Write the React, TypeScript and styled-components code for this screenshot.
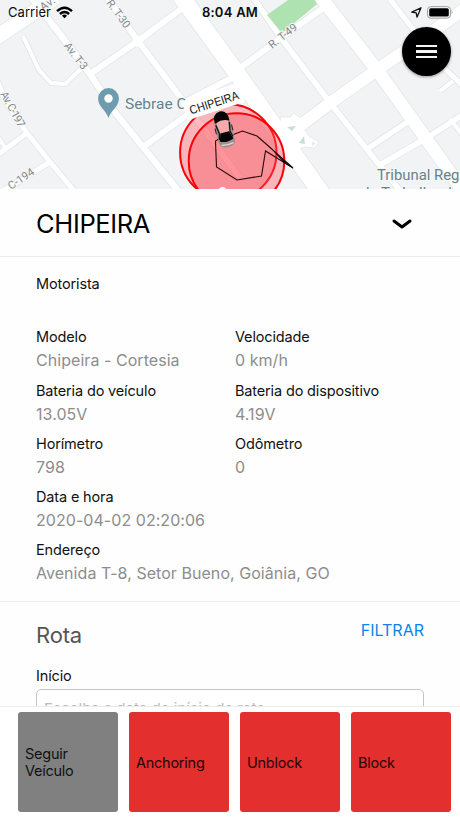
import React from 'react';
import styled, {createGlobalStyle} from "styled-components";

const GlobalStyle = createGlobalStyle`
    * {
        box-sizing: border-box;
    }
    body {
        margin: 0;
        background: #fff;
        font-family: Inter, "Liberation Sans", sans-serif;
        -webkit-font-smoothing: antialiased;
    }
`
const Screen = styled.main`
    width: 460px;
    height: 818px;
    display: flex;
    flex-direction: column;
    overflow: hidden;
    background: #fefefe;
`
const MapArea = styled.section`
    position: relative;
    flex: none;
    height: 189px;
    overflow: hidden;
    background: #f1f3f4;
`
const MapDrawing = styled.svg`
    position: absolute;
    inset: 0;
    font-family: Roboto, Inter, sans-serif;
`
const StatusBar = styled.header`
    position: relative;
    display: grid;
    grid-template-columns: 1fr auto 1fr;
    align-items: center;
    height: 24px;
    padding: 0 6px 0 8px;
    color: #0c0c0c;
`
const StatusGroup = styled.div<{ $end?: boolean }>`
    display: flex;
    align-items: center;
    justify-content: ${props => props.$end ? 'flex-end' : 'flex-start'};
    gap: 5px;
    font-size: 13px;
    letter-spacing: 0.05px;
`
const Clock = styled.time`
    margin-right: 2px;
    font-size: 13px;
    font-weight: 600;
    letter-spacing: 0.25px;
`
const MenuButton = styled.button`
    position: absolute;
    top: 27px;
    right: 9px;
    width: 49px;
    height: 49px;
    display: flex;
    flex-direction: column;
    align-items: center;
    justify-content: center;
    gap: 3px;
    padding: 0;
    border: 0;
    border-radius: 50%;
    background: #000;
    box-shadow: 0 1px 3px rgba(0, 0, 0, 0.4);
`
const MenuLine = styled.span`
    width: 21px;
    height: 2.5px;
    background: #f4f4f4;
`
const TitleBar = styled.div`
    flex: none;
    display: flex;
    align-items: center;
    justify-content: space-between;
    height: 68px;
    padding: 2px 47px 0 36px;
    border-bottom: 1px solid #ededed;
`
const Title = styled.h1`
    margin: 0;
    font-size: 25.5px;
    font-weight: 400;
    letter-spacing: -0.35px;
    color: #000;
`
const Content = styled.section`
    flex: 1;
    min-height: 0;
    overflow: hidden;
`
const Details = styled.dl`
    display: grid;
    grid-template-columns: 199px 1fr;
    grid-auto-rows: 53.3px;
    height: 345px;
    margin: 0;
    padding: 17px 36px 0;
    border-bottom: 1px solid #ededed;
`
const Field = styled.div<{ $wide?: boolean }>`
    grid-column: ${props => props.$wide ? '1 / -1' : 'auto'};
    white-space: nowrap;
`
const Label = styled.dt`
    font-size: 14.5px;
    line-height: 20px;
    letter-spacing: -0.15px;
    color: #111;
`
const Value = styled.dd`
    margin: 1px 0 0;
    font-size: 16px;
    line-height: 24px;
    letter-spacing: 0.05px;
    color: #8d8d8d;
`
const RouteHeader = styled.div`
    display: flex;
    justify-content: space-between;
    padding: 17px 36px 0;
`
const RouteTitle = styled.h2`
    margin: 0;
    font-size: 22px;
    line-height: 32px;
    font-weight: 400;
    letter-spacing: -0.2px;
    color: #555;
`
const FilterButton = styled.button`
    height: 22px;
    padding: 0;
    border: 0;
    background: none;
    font: 400 16px/22px Inter, sans-serif;
    color: #0a84e8;
`
const RouteForm = styled.form`
    padding: 15px 36px 0;
`
const InputLabel = styled.label`
    display: block;
    font-size: 14.5px;
    line-height: 20px;
    letter-spacing: -0.15px;
    color: #111;
`
const DateInput = styled.input`
    display: block;
    width: 100%;
    height: 38px;
    margin-top: 3px;
    padding: 0 7px;
    border: 1px solid #c4c4c4;
    border-radius: 5px;
    background: #fff;
    font: 400 15px Inter, sans-serif;

    &::placeholder {
        color: #bbb;
    }
`
const Actions = styled.footer`
    flex: none;
    display: flex;
    gap: 11px;
    height: 112px;
    padding: 5px 9px 0 18px;
    border-top: 1px solid #ededed;
    background: #fff;
`
const ActionButton = styled.button<{ $muted?: boolean }>`
    flex: none;
    width: 100px;
    height: 100px;
    padding: 0 7px;
    border: 0;
    border-radius: 3px;
    background: ${props => props.$muted ? '#808080' : '#e42f2f'};
    font: 400 14.5px/17px Inter, sans-serif;
    letter-spacing: -0.25px;
    text-align: left;
    color: ${props => props.$muted ? '#111' : '#240505'};
`

interface IField {
    label: string
    value?: string
    wide?: boolean
}

interface IRoad {
    d: string
    w: number
}

const fields: IField[] = [
    {label: 'Motorista', wide: true},
    {label: 'Modelo', value: 'Chipeira - Cortesia'},
    {label: 'Velocidade', value: '0 km/h'},
    {label: 'Bateria do veículo', value: '13.05V'},
    {label: 'Bateria do dispositivo', value: '4.19V'},
    {label: 'Horímetro', value: '798'},
    {label: 'Odômetro', value: '0'},
    {label: 'Data e hora', value: '2020-04-02 02:20:06', wide: true},
    {label: 'Endereço', value: 'Avenida T-8, Setor Bueno, Goiânia, GO', wide: true},
]

const roads: IRoad[] = [
    {d: 'M-6 39L56-3', w: 15},
    {d: 'M27-8L60 34L90 74L117 115L143 147L180 193', w: 6.5},
    {d: 'M106-4L138 41L181 98L240 178', w: 6},
    {d: 'M90 74L138 41L188 4', w: 6},
    {d: 'M143 147L187 115L210 98', w: 6},
    {d: 'M181 104L236 76', w: 6},
    {d: 'M23 36L39 70L51 83L65 84L82 68', w: 4},
    {d: 'M180-5L236 72L290 149L322 194', w: 17},
    {d: 'M319-5L377 70L417 126L464 192', w: 13},
    {d: 'M466 8L377 70L333 101L286 136', w: 12},
    {d: 'M240 68L281 38L326 6', w: 6},
    {d: 'M248-10L281 38L331 104L377 162L402 193', w: 5.5},
    {d: 'M386-6L413 29L443 67L463 86', w: 5},
    {d: 'M440 91L453 81', w: 4},
    {d: 'M367 149L409 121', w: 5.5},
    {d: 'M380 165L430 136L464 114', w: 5.5},
    {d: 'M450 119L464 137', w: 4},
    {d: 'M-6 72L5 101L27 133L50 162L76 193', w: 5},
    {d: 'M27 133L-4 156', w: 5},
    {d: 'M-2 137L6 149', w: 4},
    {d: 'M50 162L3 191', w: 5},
]

const CityMap = () => {
    return (
        <MapDrawing width="460" height="189" viewBox="0 0 460 189">
            <g fill="none" stroke="#e3e6e8" strokeLinejoin="round">
                {roads.map(road => <path key={road.d} d={road.d} strokeWidth={road.w + 1.6}/>)}
            </g>
            <path d="M280 117L290 117L294 113L299 117L304 119L303 128L310 137L319 142L315 148L304 147L297 151L284 139Z" fill="#fff" stroke="#e3e6e8" strokeWidth=".8"/>
            <g fill="none" stroke="#fff" strokeLinejoin="round">
                {roads.map(road => <path key={road.d} d={road.d} strokeWidth={road.w}/>)}
            </g>
            <circle cx="138" cy="41" r="5.5" fill="#fff"/>
            <path d="M267 15L288 0H315L317 4L282 33Z" fill="#aee2b0"/>
            <path d="M287 127L296 126L292 131ZM299 143L304 136L305 144Z" fill="#c4dfd6"/>
            <path d="M312 141L316 144L312 146Z" fill="#e8ecee"/>

            <g fontSize="11" fill="#85898c" stroke="#f5f7f7" strokeWidth="2" paintOrder="stroke">
                <text transform="translate(43 11) rotate(-34)" textLength="16">Av.</text>
                <text transform="translate(63.500 46) rotate(52)" textLength="31">Av. T-3</text>
                <text transform="translate(106 3) rotate(54)" textLength="32">R. T-30</text>
                <text transform="translate(272 49) rotate(-38)" textLength="33">R. T-49</text>
                <text transform="translate(0 94) rotate(61)" textLength="39">Av. C-197</text>
                <text transform="translate(11 190) rotate(-34)" textLength="29">C-194</text>
            </g>

            <path d="M108.500 118C106 110 98.100 107 98.100 98.500A10.400 10.400 0 0 1 118.900 98.500C118.900 107 111 110 108.500 118Z" fill="#6e9caf"/>
            <circle cx="108.500" cy="98.500" r="4.200" fill="#fff"/>
            <g fontSize="15.500" fill="#68828c" stroke="#f5f7f7" strokeWidth="2.500" paintOrder="stroke">
                <text x="125" y="109" textLength="61.500" lengthAdjust="spacingAndGlyphs">Sebrae C</text>
                <text x="377" y="180" textLength="86" lengthAdjust="spacingAndGlyphs">Tribunal Regi</text>
                <text x="361" y="198" textLength="99" lengthAdjust="spacingAndGlyphs">de Trabalho da</text>
            </g>

            <g fill="rgba(255, 75, 85, 0.36)" stroke="#fb0007" strokeWidth="2">
                <circle cx="228.300" cy="152.500" r="48.200"/>
                <circle cx="236.500" cy="161" r="47.800"/>
            </g>
            <circle cx="222.500" cy="191" r="4" fill="#fff"/>
            <path d="M232 135L242.500 131L257 136L265 143L293 168L265.500 151L261.500 176L237 180L216.500 167L215.500 141L222 137" fill="none" stroke="#2a0709" strokeWidth="1.100"/>
            <path d="M273 151L294 169L284 163Z" fill="#16090a"/>

            <g transform="translate(213.500 102.500) rotate(-18)">
                <rect x="-30" y="-11" width="60" height="20" fill="#fff"/>
                <text x="-25" y="4.500" textLength="51" lengthAdjust="spacingAndGlyphs" fontFamily="Liberation Sans" fontSize="12" fill="#151515">CHIPEIRA</text>
            </g>

            <g transform="translate(224 129.500) rotate(-14)">
                <path d="M-7-14Q0-21 7-14L8.500-3L8 14Q7 18 0 18Q-7 18-8 14L-8.500-3Z" fill="#9b9090"/>
                <path d="M-7.500-8Q-8-18 0-18.500Q8-18 7.500-8L4-7Q0-9-4-7Z" fill="#050505"/>
                <path d="M-6-8Q0-11 6-8L4.500 3H-4.500Z" fill="#f7a9ab"/>
                <path d="M-4.500 3H4.500L7 11Q0 14-7 11Z" fill="#050505"/>
                <path d="M-7-6L-5.500 3L-7 9M7-6L5.500 3L7 9" fill="none" stroke="#151212" strokeWidth="1.300"/>
                <path d="M-6 15Q0 16.500 6 15" fill="none" stroke="#e9d0d0" strokeWidth="1.300"/>
                <path d="M-8.500-3V3M8.500-3V3" stroke="#222" strokeWidth="1"/>
            </g>
        </MapDrawing>
    );
};

const App = () => {
    return (
        <>
            <GlobalStyle/>
            <Screen>
                <MapArea>
                    <CityMap/>
                    <StatusBar>
                        <StatusGroup>
                            Carrier
                            <svg width="17" height="13" viewBox="0 0 17 13">
                                <g fill="none" stroke="#000" strokeWidth="2.400">
                                    <path d="M1 5.200Q8.500-1.800 16 5.200"/>
                                    <path d="M3.900 8Q8.500 3.800 13.100 8"/>
                                </g>
                                <path d="M8.500 12.300L5.900 9.700Q8.500 7.500 11.100 9.700Z"/>
                            </svg>
                        </StatusGroup>
                        <Clock>8:04 AM</Clock>
                        <StatusGroup $end>
                            <svg width="11" height="11" viewBox="0 0 11 11">
                                <path d="M.8 5.200L10 .8L6 10.200L5.200 5.800Z" fill="none" stroke="#111" strokeWidth="1.300" strokeLinejoin="round"/>
                            </svg>
                            <svg width="27" height="13" viewBox="0 0 27 13">
                                <rect x=".6" y=".7" width="22.800" height="11.400" rx="3" fill="#fff" stroke="#999"/>
                                <rect x="2.200" y="2.200" width="19.600" height="8.400" rx="1.500"/>
                                <path d="M24.700 4.500Q26.500 6.400 24.700 8.300Z" fill="#888"/>
                            </svg>
                        </StatusGroup>
                    </StatusBar>
                    <MenuButton aria-label="Menu">
                        <MenuLine/>
                        <MenuLine/>
                        <MenuLine/>
                    </MenuButton>
                </MapArea>
                <TitleBar>
                    <Title>CHIPEIRA</Title>
                    <svg width="22" height="14" viewBox="0 0 22 14">
                        <path d="M3 4L11 10L19 4" fill="none" stroke="#000" strokeWidth="3" strokeLinecap="round" strokeLinejoin="round"/>
                    </svg>
                </TitleBar>
                <Content>
                    <Details>
                        {fields.map(field => (
                            <Field key={field.label} $wide={field.wide}>
                                <Label>{field.label}</Label>
                                <Value>{field.value ? field.value : ''}</Value>
                            </Field>
                        ))}
                    </Details>
                    <RouteHeader>
                        <RouteTitle>Rota</RouteTitle>
                        <FilterButton>FILTRAR</FilterButton>
                    </RouteHeader>
                    <RouteForm>
                        <InputLabel htmlFor="start">Início</InputLabel>
                        <DateInput id="start" placeholder="Escolha a data de início da rota"/>
                    </RouteForm>
                </Content>
                <Actions>
                    <ActionButton $muted>Seguir Veículo</ActionButton>
                    <ActionButton>Anchoring</ActionButton>
                    <ActionButton>Unblock</ActionButton>
                    <ActionButton>Block</ActionButton>
                </Actions>
            </Screen>
        </>
    );
};

export default App;
